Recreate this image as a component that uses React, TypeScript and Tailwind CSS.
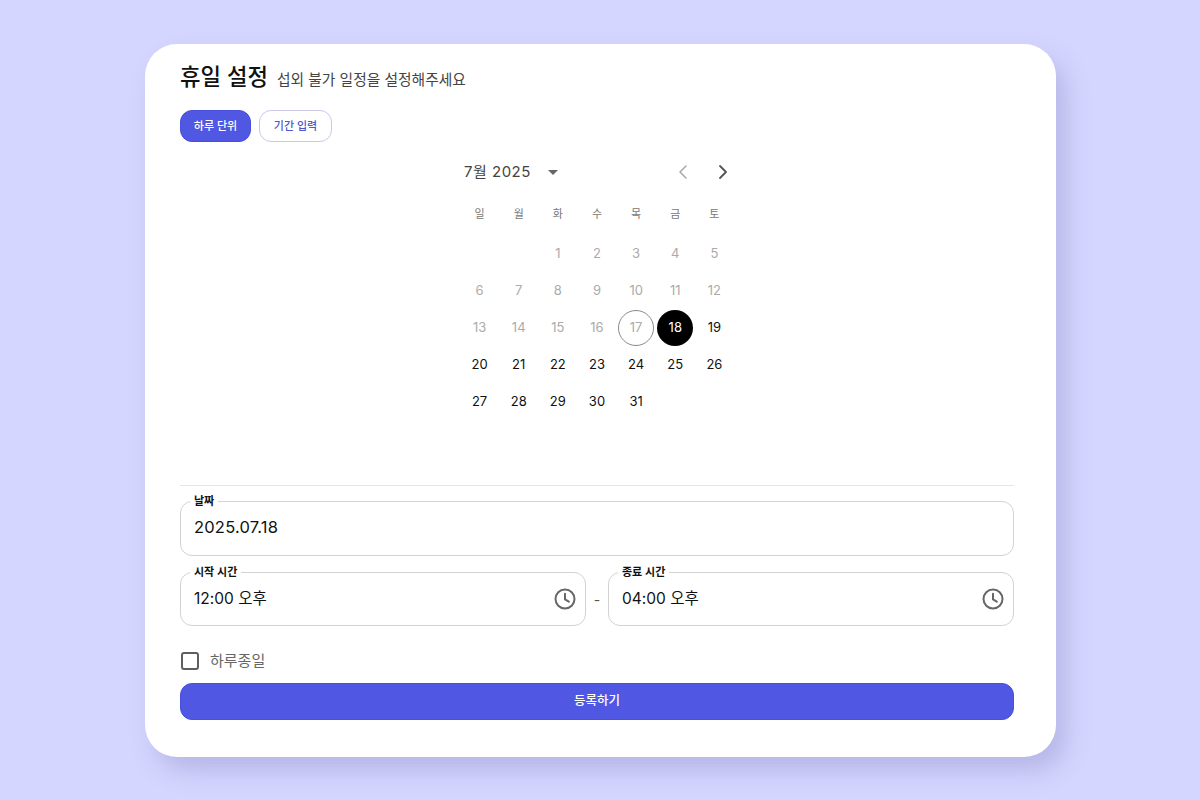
import { ChevronLeft, ChevronRight } from "lucide-react";

const FONT = "font-['Inter','Noto_Sans_CJK_KR',sans-serif]";

const weekdays = ["일", "월", "화", "수", "목", "금", "토"];
const days: (number | null)[] = [null, null, ...Array.from({ length: 31 }, (_, i) => i + 1)];

function ClockIcon() {
  return (
    <svg width="24" height="24" viewBox="0 0 24 24" fill="none" stroke="#666666" strokeWidth="2" strokeLinecap="round" strokeLinejoin="round">
      <circle cx="12" cy="12" r="9.5" />
      <path d="M12 6.8V12.4L15.8 14.7" />
    </svg>
  );
}

function Field({ label, value, icon, className }: { label: string; value: string; icon?: boolean; className?: string }) {
  return (
    <fieldset className={`rounded-xl border border-[#d2d2d2] pl-[9px] pr-[8px] ${icon ? "h-[59px]" : "h-[60px]"} ${className ?? ""}`}>
      <legend className="px-1 text-[11px] leading-[11px] font-semibold text-[#111111]">{label}</legend>
      <div className="flex h-[41px] items-center justify-between pl-1">
        <span className={icon ? "text-[15.5px] text-[#111111]" : "text-[16.5px] tracking-[0.2px] text-[#111111]"}>{value}</span>
        {icon && <ClockIcon />}
      </div>
    </fieldset>
  );
}

function Calendar() {
  return (
    <div className="mx-auto w-[274px]">
      <div className="flex h-[30px] items-center pl-[4px] pt-[2px]">
        <span className="text-[15px] tracking-[0.5px] text-[#444444]">7월 2025</span>
        <span className="ml-[17px] h-0 w-0 border-x-[5px] border-t-[5px] border-x-transparent border-t-[#666666]" />
        <div className="ml-auto -mr-[1px] flex items-center gap-[16px]">
          <ChevronLeft size={24} strokeWidth={1.5} className="text-[#a8a8a8]" />
          <ChevronRight size={24} strokeWidth={1.8} className="text-[#555555]" />
        </div>
      </div>
      <div className="mt-[17px] grid grid-cols-7">
        {weekdays.map((d) => (
          <div key={d} className="flex h-[22px] items-center justify-center text-[11px] text-[#777777]">
            {d}
          </div>
        ))}
      </div>
      <div className="mt-[10px] grid grid-cols-7 auto-rows-[37px]">
        {days.map((d, i) => (
          <div key={i} className="flex items-center justify-center">
            {d !== null && (
              <span
                className={`flex h-9 w-9 items-center justify-center rounded-full text-[13px] ${
                  d === 18
                    ? "bg-black text-white"
                    : d === 17
                      ? "border border-[#8a8a8a] text-[#ababab]"
                      : d < 17
                        ? "text-[#ababab]"
                        : "text-[#111111]"
                }`}
              >
                {d}
              </span>
            )}
          </div>
        ))}
      </div>
    </div>
  );
}

export default function App() {
  return (
    <div className={`flex h-[800px] w-[1200px] justify-center overflow-hidden bg-[#d5d6ff] pt-[44px] ${FONT}`}>
      <div className="ml-[1px] h-[713px] w-[911px] rounded-[32px] bg-white pl-[35px] pr-[42px] pt-[19px] shadow-[10px_14px_24px_rgba(90,90,160,0.25)]">
        <div className="flex h-[28px] items-center">
          <h1 className="text-[22.3px] font-medium text-[#111111]">휴일 설정</h1>
          <span className="ml-[9px] mt-[6px] text-[14.75px] text-[#444444]">섭외 불가 일정을 설정해주세요</span>
        </div>

        <div className="mt-[19px] flex gap-2">
          <button type="button" className="h-8 w-[71px] rounded-xl border border-[#4650d8] bg-[#4f57e3] text-[11px] font-medium text-white">
            하루 단위
          </button>
          <button type="button" className="h-8 w-[73px] rounded-xl border border-[#c9c8ea] bg-white text-[11px] font-medium text-[#4f57c8]">
            기간 입력
          </button>
        </div>

        <div className="mt-[14px] h-[329px]">
          <Calendar />
        </div>

        <div className="border-t border-[#e6e6e6] pt-[10px]">
          <Field label="날짜" value="2025.07.18" />
          <div className="mt-[11px] flex items-start">
            <Field label="시작 시간" value="12:00 오후" icon className="w-[406px]" />
            <span className="flex h-[59px] w-[22px] items-center justify-center pt-[5px] text-[14px] text-[#555555]">-</span>
            <Field label="종료 시간" value="04:00 오후" icon className="w-[406px]" />
          </div>
        </div>

        <label className="mt-[22px] flex h-[26px] items-center">
          <span className="ml-[1px] h-[18px] w-[18px] rounded-[3px] border-[2.5px] border-[#5f5f5f]" />
          <span className="ml-[11px] text-[15px] text-[#666666]">하루종일</span>
        </label>

        <button type="button" className="mt-[9px] h-[37px] w-full rounded-xl border border-[#4650d8] bg-[#4f57e3] text-[12.5px] font-medium text-white">
          등록하기
        </button>
      </div>
    </div>
  );
}
